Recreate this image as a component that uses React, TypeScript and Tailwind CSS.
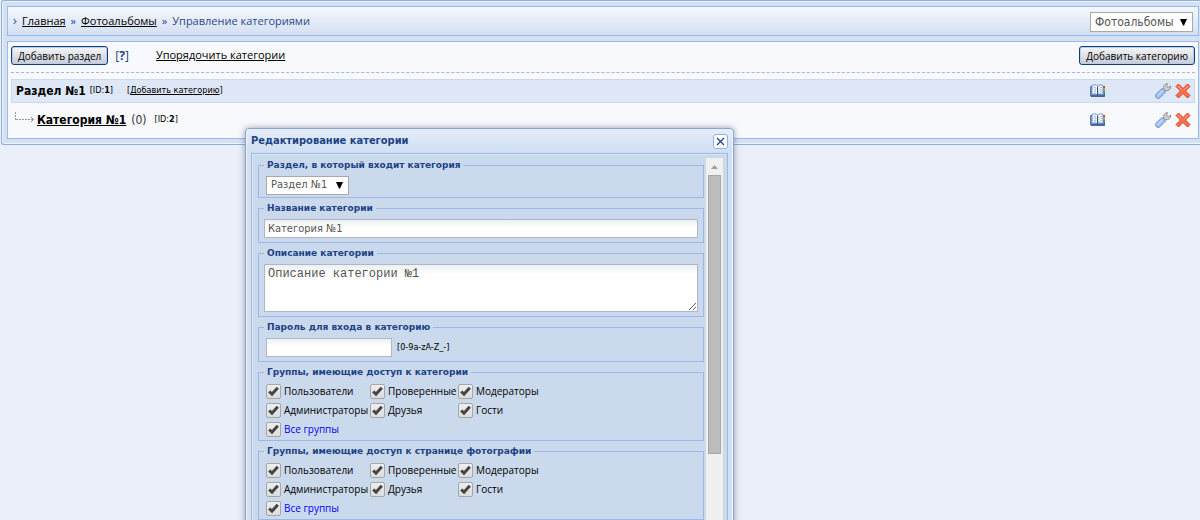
import React, { useId } from "react";

const groups = ["Пользователи", "Проверенные", "Модераторы", "Администраторы", "Друзья", "Гости"];

function BookIcon() {
  return (
    <svg width="16" height="14" viewBox="0 0 16 14" className="block">
      <path d="M.5 2.500h14v9.500H.5z" fill="#7d9dcc" stroke="#5878ad" />
      <path d="M1 11.500h14v1.200H1z" fill="#2c4674" />
      <path d="M2 1.500C4 .5 6 .7 7.500 2 9 .7 11 .5 13 1.500v9c-2-1-4-.8-5.500.5C6 9.700 4 9.500 2 10.500z" fill="#fff" stroke="#5f86bd" strokeWidth=".9" />
      <path d="M7 2.500h1.200v9H7z" fill="#2b4f85" />
      <path d="M5.500 2.500v7M10 3.500v6" stroke="#c3d4ec" />
      <path d="M3.500 3.500h1.500M3.500 5.500h1.500M3.500 7.500h1.500M10.500 3.500h1.500M10.500 5.500h1.500M10.500 7.500h1.500" stroke="#a3bbdf" />
      <path d="M13.500 2H15v2h-1.500z" fill="#e03a2a" />
      <path d="M13.500 4.500H15v2h-1.500z" fill="#f0a419" />
      <path d="M13.500 7H15v2h-1.500z" fill="#39a845" />
      <path d="M13.500 9.500H15V11h-1.500z" fill="#3a6ad0" />
    </svg>
  );
}

function WrenchIcon() {
  return (
    <svg width="16" height="16" viewBox="0 0 16 16" className="block">
      <path d="M7.800 7.500 8.800 5.500C8 3 9.800.6 12.800.7L11.600 2.500l.6 1.600 1.700.3L15.500 3c.6 2.800-1.500 5-4.300 4.600L9.500 9z" fill="#d0d0d0" stroke="#909090" strokeWidth="1" strokeLinejoin="round" />
      <path d="M6.500 6Q8 5.200 9.400 6.600 10.800 8 10 9.500L5 14.700C2.500 17-.8 13.500 1 11.300z" fill="#a3c1f3" stroke="#6b8fd3" strokeWidth="1" />
      <path d="M7.200 8 3 12.300" stroke="#c3d8fa" strokeWidth="1.300" strokeLinecap="round" />
    </svg>
  );
}

function CrossIcon() {
  return (
    <svg width="16" height="16" viewBox="0 0 16 16" className="block">
      <path d="M1 3.500 3.500 1 8 5.500 12.500 1 15 3.500 10.500 8 15 12.500 12.500 15 8 10.500 3.500 15 1 12.500 5.500 8z" fill="#f8704f" stroke="#dc4524" strokeWidth="1" strokeLinejoin="round" />
      <path d="M3 3l3.500 3.500M13 3 9.500 6.500" fill="none" stroke="#fdb09a" strokeWidth="1" />
    </svg>
  );
}

function RowIcons() {
  return (
    <div className="flex items-center pr-[3px]">
      <button aria-label="Открыть" className="mr-[49px]"><BookIcon /></button>
      <button aria-label="Изменить" className="mr-1"><WrenchIcon /></button>
      <button aria-label="Удалить"><CrossIcon /></button>
    </div>
  );
}

function PushButton({ children }: { children: React.ReactNode }) {
  return (
    <button className="h-[19px] rounded-[3px] border border-[#0f3f74] bg-linear-to-b from-[#f6f6f8] to-[#c9ccd6] px-1.5 text-[10px] leading-4 whitespace-nowrap text-black shadow-[inset_0_0_0_1px_#b8cdec]">
      {children}
    </button>
  );
}

function Dropdown({ label, value, className }: { label: string; value: string; className: string }) {
  return (
    <div className={"grid items-center font-['DejaVu_Sans_Condensed','Noto_Sans',sans-serif] " + className}>
      <select aria-label={label} className="col-start-1 row-start-1 h-full w-full appearance-none border border-[#a9a9a9] bg-white pl-1 text-[#555]">
        <option>{value}</option>
      </select>
      <svg width="7" height="7" viewBox="0 0 7 7" className="pointer-events-none col-start-1 row-start-1 mr-1.5 justify-self-end">
        <path d="M0 0h7L4 6.500H3z" fill="#000" />
      </svg>
    </div>
  );
}

function Field({ title, className, children }: { title: string; className: string; children: React.ReactNode }) {
  return (
    <fieldset className={"min-w-0 border border-[#9fb6e8] px-[5px] " + className}>
      <legend className="px-[3px] font-['DejaVu_Sans',Verdana,sans-serif] text-[9px] leading-3 font-bold text-[#1c4287]">{title}</legend>
      {children}
    </fieldset>
  );
}

function Check({ label, blue = false }: { label: string; blue?: boolean }) {
  const id = useId();
  return (
    <div className="flex h-[19px] items-center gap-[3px]">
      <span className="grid size-[15px] place-items-center">
        <input id={id} type="checkbox" defaultChecked className="peer col-start-1 row-start-1 size-[15px] appearance-none rounded-[2px] border border-[#a6a6a6] bg-linear-to-b from-[#eeeeee] to-[#dcdcdc]" />
        <svg width="11" height="11" viewBox="0 0 11 11" className="pointer-events-none invisible col-start-1 row-start-1 peer-checked:visible">
          <path d="M1.200 5.500 4 8.200 9.800 1.800" fill="none" stroke="#444" strokeWidth="3" />
        </svg>
      </span>
      <label htmlFor={id} className={blue ? "whitespace-nowrap text-[#0000ff]" : "whitespace-nowrap text-black"}>{label}</label>
    </div>
  );
}

function GroupField({ title }: { title: string }) {
  return (
    <Field title={title} className="pt-1 pb-px">
      <div className="grid grid-cols-[104px_88px_1fr] pl-0.5 text-[10px]">
        {groups.map((g) => <Check key={g} label={g} />)}
        <Check label="Все группы" blue />
      </div>
    </Field>
  );
}

function EditDialog() {
  return (
    <section role="dialog" aria-label="Редактирование категории" className="absolute top-32 left-[245px] flex h-[600px] w-[489px] flex-col rounded-t-[4px] border border-[#8aa8cf] bg-[#d3e1f3] px-[5px] text-[11px] shadow-[0_0_6px_rgba(70,80,110,0.55),inset_1px_1px_0_#eef4fc,inset_-1px_0_0_#eef4fc]">
      <header className="-mx-1 flex h-6 shrink-0 items-center justify-between bg-linear-to-b from-[#e6edf8] to-[#cfdff3] pr-1 pl-1">
        <h2 className="font-['DejaVu_Sans_Condensed','Noto_Sans',sans-serif] text-[11px] font-bold text-[#1c4287]">Редактирование категории</h2>
        <button aria-label="Закрыть" className="grid size-[15px] place-items-center rounded-[3px] border border-[#8fb0e6] bg-white">
          <svg width="9" height="9" viewBox="0 0 9 9"><path d="M1 1l7 7M8 1 1 8" stroke="#23479a" strokeWidth="1.400" /></svg>
        </button>
      </header>
      <div className="flex flex-1 border border-[#9fb6e8] bg-[#cad9eb] pt-1 pr-1 pl-1.5 shadow-[inset_1px_1px_0_#dbe6f5]">
        <div className="flex flex-1 flex-col gap-1 pt-px">
          <Field title="Раздел, в который входит категория" className="pt-[5px] pb-1">
            <div className="pl-0.5"><Dropdown label="Раздел" value="Раздел №1" className="h-[17px] w-[83px]" /></div>
          </Field>
          <Field title="Название категории" className="pt-[5px] pb-1">
            <input aria-label="Название категории" defaultValue="Категория №1" className="block h-[19px] w-full border border-[#b1b5c8] bg-linear-to-b from-[#ecf0f0] to-white to-40% px-[3px] font-['DejaVu_Sans_Condensed','Noto_Sans',sans-serif] text-[#555]" />
          </Field>
          <Field title="Описание категории" className="pt-[5px] pb-1">
            <textarea aria-label="Описание категории" defaultValue="Описание категории №1" className="block h-12 w-full border border-[#b1b5c8] bg-linear-to-b from-[#ecf0f0] to-white to-20% px-[3px] py-0.5 font-['Liberation_Mono','Courier_New',monospace] text-[12px] leading-[14px] text-[#555]" />
          </Field>
          <Field title="Пароль для входа в категорию" className="pt-[5px] pb-1">
            <div className="flex items-center gap-[5px] pl-0.5">
              <input id="pw" aria-label="Пароль для входа в категорию" className="block h-[19px] w-[126px] border border-[#b1b5c8] bg-linear-to-b from-[#ecf0f0] to-white to-40% px-[3px]" />
              <label htmlFor="pw" className="font-['DejaVu_Sans_Condensed','Noto_Sans',sans-serif] text-[9px] text-black">[0-9a-zA-Z_-]</label>
            </div>
          </Field>
          <GroupField title="Группы, имеющие доступ к категории" />
          <GroupField title="Группы, имеющие доступ к странице фотографии" />
        </div>
        <div className="ml-0.5 flex w-[17px] flex-col items-center bg-[#f0f0f0]">
          <svg width="7" height="4" viewBox="0 0 7 4" className="mt-[7px] mb-1.5"><path d="M0 4 3.500 0 7 4z" fill="#a0a0a0" /></svg>
          <div className="h-[279px] w-[13px] border border-[#a8a8a8] bg-[#bcbcbc]" />
        </div>
      </div>
    </section>
  );
}

export default function App() {
  return (
    <div className="relative h-screen overflow-hidden bg-[#ebeff9] pl-px font-['Open_Sans','Noto_Sans',sans-serif] text-[11px]">
      <main className="flex flex-col gap-[5px] rounded-l-[3px] border border-r-0 border-[#93aed6] bg-[#d3e1f3] py-[5px] pr-px pl-[5px] shadow-[inset_1px_1px_0_#eef4fc,inset_0_-1px_0_#eef4fc]">
        <nav className="flex h-[30px] items-center justify-between border border-[#99b9ec] bg-linear-to-b from-[#f5f8fd] to-[#d3dff1] px-[5px] text-[#2b4a86]">
          <div className="flex items-center gap-[5px] whitespace-nowrap">
            <svg width="4" height="7" viewBox="0 0 4 7"><path d="M.7 1l2.300 2.500L.7 6" fill="none" stroke="#4a86c8" strokeWidth="1.300" /></svg>
            <a href="#" className="text-black underline">Главная</a>
            <span>»</span>
            <a href="#" className="text-black underline">Фотоальбомы</a>
            <span>»</span>
            <span>Управление категориями</span>
          </div>
          <Dropdown label="Модуль" value="Фотоальбомы" className="h-[18px] w-[103px] text-[12px]" />
        </nav>
        <div className="h-[98px] border border-[#99b9ec] bg-[#f8f9fd] px-[3px] pt-1">
          <div className="flex items-center">
            <PushButton>Добавить раздел</PushButton>
            <span className="ml-[7px] text-[12px] leading-4 text-[#1c4287]">[<b>?</b>]</span>
            <a href="#" className="ml-[27px] text-black underline">Упорядочить категории</a>
            <span className="ml-auto flex"><PushButton>Добавить категорию</PushButton></span>
          </div>
          <div className="mt-[7px] border-t border-dashed border-[#9fb6e8]" />
          <div className="mt-1.5 flex h-6 items-center border border-[#c9d8ec] bg-[#dde7f5] pl-1 font-['DejaVu_Sans_Condensed','Noto_Sans',sans-serif] text-black">
            <b className="text-[12px]">Раздел №1</b>
            <span className="ml-1 text-[9px]">[ID:<b>1</b>]</span>
            <span className="ml-[14px] text-[9px]">[<a href="#" className="underline">Добавить категорию</a>]</span>
            <div className="ml-auto"><RowIcons /></div>
          </div>
          <div className="mt-[5px] flex h-6 items-center border border-transparent pl-[3px] font-['DejaVu_Sans_Condensed','Noto_Sans',sans-serif] text-black">
            <svg width="20" height="12" viewBox="0 0 20 12" className="mb-1"><path d="M.5 0v8M1 7.500h17" fill="none" stroke="#999" strokeDasharray="2 1" /><path d="M16 5l2.500 2.500L16 10" fill="none" stroke="#888" /></svg>
            <a href="#" className="ml-0.5 text-[12px] font-bold underline">Категория №1</a>
            <span className="ml-[5px] text-[12px] text-[#333]">(0)</span>
            <span className="ml-2 text-[9px]">[ID:<b>2</b>]</span>
            <div className="ml-auto"><RowIcons /></div>
          </div>
        </div>
      </main>
      <EditDialog />
    </div>
  );
}
